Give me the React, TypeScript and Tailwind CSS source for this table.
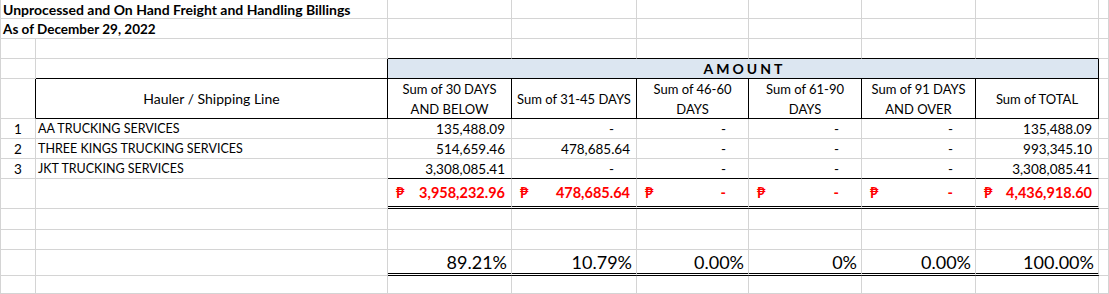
import React from "react";

const grid = "border-[#d4d4d4]";

const rows = [
  { no: "1", name: "AA TRUCKING SERVICES", vals: ["135,488.09", "-", "-", "-", "-", "135,488.09"] },
  { no: "2", name: "THREE KINGS TRUCKING SERVICES", vals: ["514,659.46", "478,685.64", "-", "-", "-", "993,345.10"] },
  { no: "3", name: "JKT TRUCKING SERVICES", vals: ["3,308,085.41", "-", "-", "-", "-", "3,308,085.41"] },
];

const headers = [
  ["Sum of 30 DAYS", "AND BELOW"],
  ["Sum of 31-45 DAYS"],
  ["Sum of 46-60", "DAYS"],
  ["Sum of 61-90", "DAYS"],
  ["Sum of 91 DAYS", "AND OVER"],
  ["Sum of TOTAL"],
];

const totals = ["3,958,232.96", "478,685.64", "-", "-", "-", "4,436,918.60"];
const percents = ["89.21%", "10.79%", "0.00%", "0%", "0.00%", "100.00%"];

// plain gridline cell, owns its right + bottom edge
function Cell({ className = "", children }: { className?: string; children?: React.ReactNode }) {
  return <div className={`border-r border-b ${grid} ${className}`}>{children}</div>;
}

function Amount({ value }: { value: string }) {
  if (value === "-") {
    return <span className="pr-[22px]">-</span>;
  }
  return <span className="pr-[6px]">{value}</span>;
}

export default function App() {
  return (
    <div
      className="w-[1109px] h-[294px] overflow-hidden bg-white text-black text-[14px] border-l border-[#d4d4d4]"
      style={{ fontFamily: "Lato, 'Noto Sans', 'DejaVu Sans', sans-serif" }}
    >
      <div className="grid grid-cols-[35px_352px_124px_125px_112px_113px_114px_123px_1fr] grid-rows-[19px_20px_20px_20px_40px_20px_20px_20px_30px_21px_20px_26px_18px]">
        {/* title rows */}
        <Cell className="col-span-2 font-bold leading-[19px] pl-[2px] whitespace-nowrap">
          Unprocessed and On Hand Freight and Handling Billings
        </Cell>
        {Array.from({ length: 7 }).map((_, i) => (
          <Cell key={`r1-${i}`} />
        ))}
        <Cell className="col-span-2 font-bold leading-[20px] pl-[2px] whitespace-nowrap text-[13.5px]">
          As of December 29, 2022
        </Cell>
        {Array.from({ length: 7 }).map((_, i) => (
          <Cell key={`r2-${i}`} />
        ))}

        {/* spacer row above AMOUNT band */}
        <Cell />
        <Cell />
        {Array.from({ length: 6 }).map((_, i) => (
          <div key={`r3-${i}`} className={`border-r border-b ${grid} border-b-black`} />
        ))}
        <Cell />

        {/* AMOUNT band */}
        <Cell />
        <div className="border-b border-b-black border-r border-r-black" />
        <div className="col-span-6 border-r border-b border-black bg-[#dce6f1] flex items-center justify-center font-bold tracking-[3px] leading-[19px] pl-[3px]">
          AMOUNT
        </div>
        <Cell />

        {/* column headers */}
        <div className={`border-b ${grid} border-r border-r-black`} />
        <div className="border-r border-b border-black flex items-center justify-center">Hauler / Shipping Line</div>
        {headers.map((h, i) => (
          <div
            key={`h-${i}`}
            className="border-r border-b border-black flex flex-col items-center justify-center leading-[20px] text-center text-[13px]"
          >
            {h.map((line) => (
              <span key={line}>{line}</span>
            ))}
          </div>
        ))}
        <Cell />

        {/* data rows */}
        {rows.map((r, ri) => (
          <React.Fragment key={r.no}>
            <Cell className="text-center leading-[20px] text-[13.5px]">{r.no}</Cell>
            <Cell className="pl-[2px] leading-[20px] whitespace-nowrap text-[12.5px]">{r.name}</Cell>
            {r.vals.map((v, vi) => (
              <div
                key={`d-${ri}-${vi}`}
                className={
                  ri === rows.length - 1
                    ? `border-r ${grid} border-b border-b-black flex justify-end leading-[20px] text-[13.5px]`
                    : `border-r border-b ${grid} flex justify-end leading-[20px] text-[13.5px]`
                }
              >
                <Amount value={v} />
              </div>
            ))}
            <Cell />
          </React.Fragment>
        ))}

        {/* totals */}
        <Cell />
        <Cell />
        {totals.map((t, i) => (
          <div
            key={`t-${i}`}
            className={`border-r ${grid} border-b-[3px] border-double border-b-black flex items-center justify-between font-bold text-[#ff0000] text-[14.5px] pl-[8px]`}
          >
            <span>₱</span>
            <Amount value={t} />
          </div>
        ))}
        <Cell />

        {/* blank rows */}
        {Array.from({ length: 18 }).map((_, i) => (
          <Cell key={`b-${i}`} />
        ))}

        {/* percentages */}
        <Cell />
        <Cell />
        {percents.map((p, i) => (
          <div
            key={`p-${i}`}
            className={`border-r ${grid} border-b-[3px] border-double border-b-black flex items-end justify-end text-[18px] leading-[22px] pr-[4px]`}
          >
            {p}
          </div>
        ))}
        <Cell />

        {/* last visible row */}
        {Array.from({ length: 9 }).map((_, i) => (
          <Cell key={`z-${i}`} />
        ))}
      </div>
    </div>
  );
}
